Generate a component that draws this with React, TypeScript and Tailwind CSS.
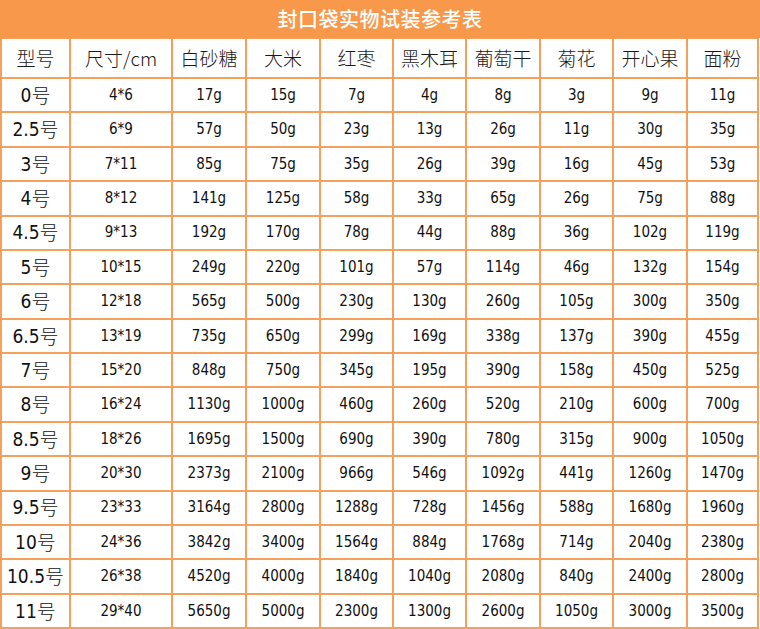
import React from "react";

const headers = ["型号", "尺寸/cm", "白砂糖", "大米", "红枣", "黑木耳", "葡萄干", "菊花", "开心果", "面粉"];

const rows: string[][] = [
  ["0号", "4*6", "17g", "15g", "7g", "4g", "8g", "3g", "9g", "11g"],
  ["2.5号", "6*9", "57g", "50g", "23g", "13g", "26g", "11g", "30g", "35g"],
  ["3号", "7*11", "85g", "75g", "35g", "26g", "39g", "16g", "45g", "53g"],
  ["4号", "8*12", "141g", "125g", "58g", "33g", "65g", "26g", "75g", "88g"],
  ["4.5号", "9*13", "192g", "170g", "78g", "44g", "88g", "36g", "102g", "119g"],
  ["5号", "10*15", "249g", "220g", "101g", "57g", "114g", "46g", "132g", "154g"],
  ["6号", "12*18", "565g", "500g", "230g", "130g", "260g", "105g", "300g", "350g"],
  ["6.5号", "13*19", "735g", "650g", "299g", "169g", "338g", "137g", "390g", "455g"],
  ["7号", "15*20", "848g", "750g", "345g", "195g", "390g", "158g", "450g", "525g"],
  ["8号", "16*24", "1130g", "1000g", "460g", "260g", "520g", "210g", "600g", "700g"],
  ["8.5号", "18*26", "1695g", "1500g", "690g", "390g", "780g", "315g", "900g", "1050g"],
  ["9号", "20*30", "2373g", "2100g", "966g", "546g", "1092g", "441g", "1260g", "1470g"],
  ["9.5号", "23*33", "3164g", "2800g", "1288g", "728g", "1456g", "588g", "1680g", "1960g"],
  ["10号", "24*36", "3842g", "3400g", "1564g", "884g", "1768g", "714g", "2040g", "2380g"],
  ["10.5号", "26*38", "4520g", "4000g", "1840g", "1040g", "2080g", "840g", "2400g", "2800g"],
  ["11号", "29*40", "5650g", "5000g", "2300g", "1300g", "2600g", "1050g", "3000g", "3500g"],
];

const cjk = "font-['Noto_Sans_CJK_SC',sans-serif]";
const num = "font-['DejaVu_Sans_Condensed','DejaVu_Sans','Noto_Sans_CJK_SC',sans-serif]";

export default function App() {
  return (
    <div className="w-[760px] h-[629px] bg-white overflow-hidden flex flex-col">
      {/* title bar */}
      <div className="h-[38px] shrink-0 bg-[#f7984a] flex items-center justify-center">
        <h1 className={`${cjk} text-white text-[20px] font-medium tracking-[0.5px]`}>封口袋实物试装参考表</h1>
      </div>

      <div className="flex-1 w-[759px] grid grid-cols-[67px_100px_72px_72px_71px_71px_72px_71px_72px_69px] grid-rows-[38px_repeat(16,1fr)] gap-[2px] px-[2px] pt-[1px] pb-[2px] bg-[#f5a15c]">
        {headers.map((h) => (
          <div key={h} className={`${cjk} bg-white flex items-center justify-center text-[19px] font-light text-[#1a1a1a]`}>
            {h}
          </div>
        ))}
        {rows.map((r) =>
          r.map((c, i) => (
            <div
              key={r[0] + i}
              className={`bg-white flex items-center justify-center text-[#111] ${num} ${
                i === 0 ? "text-[19px]" : "text-[15px]"
              }`}
            >
              {i === 0 ? (
                <>
                  {c.replace("号", "")}
                  <span className={`${cjk} font-light`}>号</span>
                </>
              ) : (
                c
              )}
            </div>
          ))
        )}
      </div>
    </div>
  );
}
